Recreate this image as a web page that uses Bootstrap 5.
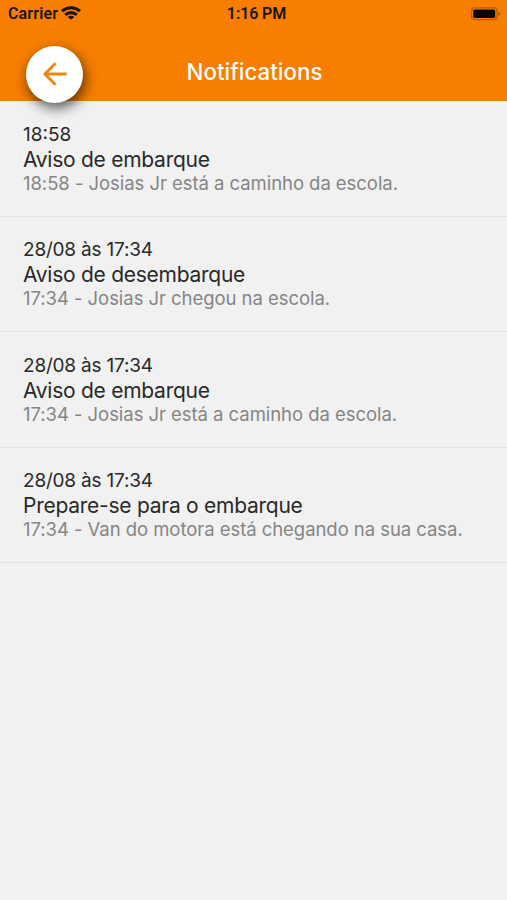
<!DOCTYPE html>
<html lang="pt-BR">
<head>
<meta charset="utf-8">
<meta name="viewport" content="width=device-width, initial-scale=1">
<title>Notifications</title>
<link rel="stylesheet" href="https://cdn.jsdelivr.net/npm/bootstrap@5.3.0/dist/css/bootstrap.min.css">
<style>
body { background: #f1f1f1; font-family: Inter, "Liberation Sans", sans-serif; min-height: 900px; overflow: hidden; }
.app-header { background: #f77e00; height: 101.4px; }
.status-line { height: 27px; padding: 0 6px 0 8px; font: 600 16px/27px Roboto, sans-serif; color: #1c1203; }
.status-line > div { flex: 1 1 0; }
.carrier { letter-spacing: .15px; }
.clock { letter-spacing: -.1px; margin-left: 4px; }
.wifi { width: 20px; height: 14px; margin-left: 3px; margin-top: -1px; }
.title-bar { height: 74px; padding-left: 26px; }
.title-bar h1 { font-size: 22.3px; font-weight: 500; line-height: 28px; margin-top: 31px; letter-spacing: .03px; }
.side { width: 57px; }
.back-btn { width: 57px; height: 57px; margin-top: 18.5px; box-shadow: 2px 5px 13px rgba(0,0,0,.65); position: relative; z-index: 2; }
.notice { height: 115.5px; padding: 20.4px 23px 0; border-bottom: 1px solid #e4e4e4; color: #292929; }
.when { font-size: 19px; line-height: 25px; letter-spacing: -.2px; }
.when.short { letter-spacing: 0; }
.subject { font-size: 21px; line-height: 25px; font-weight: 400; letter-spacing: -.26px; }
.detail { font-size: 18.5px; line-height: 23px; letter-spacing: -.05px; color: #858585; white-space: nowrap; }
</style>
<script src="https://cdn.jsdelivr.net/npm/bootstrap@5.3.0/dist/js/bootstrap.bundle.min.js"></script>
</head>
<body>
<header class="app-header">
  <div class="status-line d-flex align-items-center">
    <div class="d-flex align-items-center"><span class="carrier">Carrier</span>
      <svg class="wifi" viewBox="0 0 20 14" fill="none" stroke="#1c1203" stroke-width="3.1"><path d="M1 5.2C6 .6 14 .6 19 5.2M4.2 8.9c3.3-3 8.3-3 11.6 0"/><path d="M10 13.8 6.8 10.9c1.8-1.5 4.6-1.5 6.4 0z" fill="#1c1203" stroke="none"/></svg>
    </div>
    <span class="clock">1:16 PM</span>
    <div class="d-flex justify-content-end">
      <svg width="31" height="14" viewBox="0 0 31 14"><rect x="1.5" y=".9" width="25.5" height="11.8" rx="3" fill="none" stroke="#b45c05" stroke-width="1.2"/><rect x="3.2" y="2.6" width="22" height="8.4" rx="1.5" fill="#080400"/><path d="M28.3 4.8c2 .8 2 3.2 0 4z" fill="#a45305"/></svg>
    </div>
  </div>
  <div class="title-bar d-flex align-items-start">
    <button class="back-btn btn btn-light bg-white rounded-circle border-0 p-0 d-flex align-items-center justify-content-center flex-shrink-0" aria-label="Voltar">
      <svg width="24" height="24" viewBox="0 0 24 24" fill="none" stroke="#f18412" stroke-width="2.8" stroke-linejoin="round"><path d="M12.5 1.2 1.8 12l10.7 10.8M2 12h21.5"/></svg>
    </button>
    <h1 class="flex-grow-1 text-center text-white mb-0">Notifications</h1>
    <div class="side me-4"></div>
  </div>
</header>
<main>
  <article class="notice"><div class="when short">18:58</div><h2 class="subject mb-0">Aviso de embarque</h2><p class="detail mb-0">18:58 - Josias Jr está a caminho da escola.</p></article>
  <article class="notice"><div class="when">28/08 às 17:34</div><h2 class="subject mb-0">Aviso de desembarque</h2><p class="detail mb-0">17:34 - Josias Jr chegou na escola.</p></article>
  <article class="notice"><div class="when">28/08 às 17:34</div><h2 class="subject mb-0">Aviso de embarque</h2><p class="detail mb-0">17:34 - Josias Jr está a caminho da escola.</p></article>
  <article class="notice"><div class="when">28/08 às 17:34</div><h2 class="subject mb-0">Prepare-se para o embarque</h2><p class="detail mb-0">17:34 - Van do motora está chegando na sua casa.</p></article>
</main>
</body>
</html>
